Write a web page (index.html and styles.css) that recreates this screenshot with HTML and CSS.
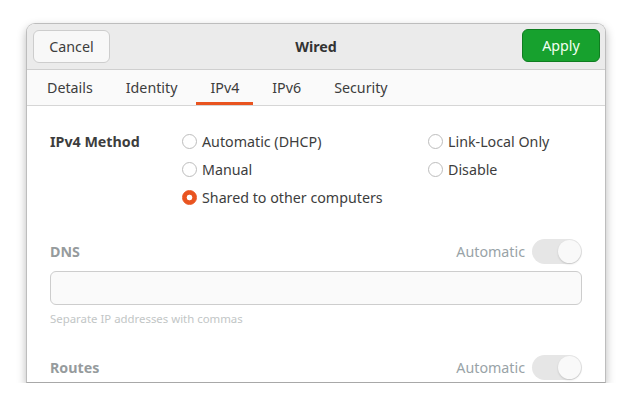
FILE: index.html
```html
<!DOCTYPE html>
<html>
<head>
<meta charset="utf-8">
<link rel="stylesheet" href="styles.css">
</head>
<body>
<div class="window">
  <div class="header">
    <button class="btn cancel">Cancel</button>
    <div class="title">Wired</div>
    <button class="btn apply">Apply</button>
  </div>
  <div class="tabs">
    <div class="tab">Details</div>
    <div class="tab">Identity</div>
    <div class="tab active">IPv4</div>
    <div class="tab">IPv6</div>
    <div class="tab">Security</div>
  </div>
  <div class="content">
    <div class="method">
      <div class="label">IPv4 Method</div>
      <div class="options">
        <div class="opt"><span class="radio"></span>Automatic (DHCP)</div>
        <div class="opt"><span class="radio"></span>Link-Local Only</div>
        <div class="opt"><span class="radio"></span>Manual</div>
        <div class="opt"><span class="radio"></span>Disable</div>
        <div class="opt"><span class="radio checked"></span>Shared to other computers</div>
      </div>
    </div>
    <div class="section dns">
      <div class="sec-head">
        <div class="sec-title">DNS</div>
        <div class="auto">Automatic <span class="switch"><span class="knob"></span></span></div>
      </div>
      <div class="input"></div>
      <div class="hint">Separate IP addresses with commas</div>
    </div>
    <div class="section routes">
      <div class="sec-head">
        <div class="sec-title">Routes</div>
        <div class="auto">Automatic <span class="switch"><span class="knob"></span></span></div>
      </div>
    </div>
  </div>
</div>
</body>
</html>
```
FILE: styles.css
```css
html, body {
  margin: 0;
  padding: 0;
  background: #ffffff;
}
body {
  font-family: "Noto Sans", "Open Sans", sans-serif;
  font-size: 14.25px;
  color: #3d3d3d;
  padding: 23px 26px 0 26px;
}
.window {
  width: 578px;
  height: 358px;
  border: 1px solid #bdbdbd;
  border-bottom: 1px solid #a8a8a8;
  border-radius: 9px 9px 0 0;
  overflow: hidden;
  background: #ffffff;
  box-shadow: 0 4px 10px rgba(0, 0, 0, 0.28);
}
.header {
  height: 45px;
  background: #ebebeb;
  border-bottom: 1px solid #cfcfcf;
  display: flex;
  align-items: center;
  justify-content: space-between;
  padding: 0 5px 0 6px;
}
.btn {
  font-family: inherit;
  font-size: 14.25px;
  height: 33px;
  border-radius: 6px;
  padding: 0;
}
.cancel {
  width: 77px;
  background: #f8f8f8;
  border: 1px solid #cdcdcd;
  color: #3d3d3d;
  margin-top: -1px;
}
.apply {
  width: 78px;
  background: #17a12e;
  border: 1px solid #0f7d20;
  color: #f2fff2;
  margin-top: -2px;
}
.title {
  font-weight: bold;
  color: #333;
  margin-top: -1px;
}
.tabs {
  height: 35px;
  background: #fafafa;
  border-bottom: 1px solid #d6d6d6;
  display: flex;
  gap: 5px;
  padding-left: 6px;
}
.tab {
  padding: 3px 14px 0 14px;
  display: flex;
  align-items: center;
  border-bottom: 3px solid transparent;
  box-sizing: border-box;
  height: 35px;
}
.tab.active {
  border-bottom-color: #e95420;
}
.content {
  padding: 25px 23px 0 23px;
}
.method {
  display: flex;
}
.label {
  width: 132px;
  font-weight: bold;
  line-height: 20px;
  margin-top: 1px;
}
.options {
  display: grid;
  grid-template-columns: 246px auto;
  row-gap: 8px;
}
.opt {
  display: flex;
  align-items: center;
  height: 20px;
}
.radio {
  width: 13px;
  height: 13px;
  border: 1px solid #bdbdbd;
  border-radius: 50%;
  margin-right: 5px;
  margin-top: 1px;
  background: #fff;
  box-sizing: content-box;
}
.radio.checked {
  border-color: #e95420;
  background: radial-gradient(circle, #ffffff 0 2.5px, #e95420 3.2px);
}
.section {
  color: #969b9d;
}
.dns {
  margin-top: 31px;
}
.sec-head {
  display: flex;
  justify-content: space-between;
  align-items: center;
  height: 26px;
}
.sec-title {
  font-weight: bold;
}
.auto {
  display: flex;
  align-items: center;
  gap: 7px;
  color: #99a3a7;
}
.switch {
  width: 50px;
  height: 25px;
  border-radius: 13px;
  background: #e6e6e6;
  position: relative;
  display: inline-block;
}
.knob {
  position: absolute;
  right: 1px;
  top: 1px;
  width: 23px;
  height: 23px;
  border-radius: 50%;
  background: #f9f9f9;
  box-shadow: 0 1px 2px rgba(0, 0, 0, 0.15);
}
.input {
  margin-top: 7px;
  height: 32px;
  border: 1px solid #cdcdcd;
  border-radius: 6px;
  background: #fafafa;
}
.hint {
  font-size: 11.4px;
  color: #c2c6c6;
  margin-top: 6px;
}
.routes {
  margin-top: 28px;
}
```
